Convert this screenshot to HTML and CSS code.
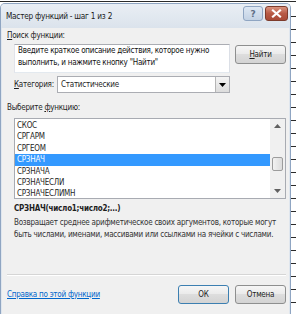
FILE: index.html
```html
<!DOCTYPE html>
<html lang="ru">
<head>
  <meta charset="UTF-8">
  <title>Мастер функций - шаг 1 из 2</title>
  <link rel="stylesheet" href="styles.css">
</head>
<body>

  <div class="window">
    <div class="titlebar">
      <span class="title">Мастер функций - шаг 1 из 2</span>
      <div class="caption-buttons">
        <div class="cap-btn help">?</div>
        <div class="cap-btn close">
          <svg width="11" height="9" viewBox="0 0 11 9">
            <path d="M2 1.5 L9 7.5 M9 1.5 L2 7.5" stroke="#fff" stroke-width="2.2" stroke-linecap="square"/>
          </svg>
        </div>
      </div>
    </div>

    <div class="content">
      <div class="label"><u>П</u>оиск функции:</div>

      <div class="search-row">
        <div class="search-box">Введите краткое описание действия, которое нужно<br>выполнить, и нажмите кнопку "Найти"</div>
        <button class="btn find-btn"><u>Н</u>айти</button>
      </div>

      <div class="category-row">
        <span class="cat-label"><u>К</u>атегория:</span>
        <div class="select">
          <span class="select-value">Статистические</span>
          <div class="select-arrow">
            <svg width="7" height="4" viewBox="0 0 7 4"><path d="M0 0 H7 L3.5 4 Z" fill="#000"/></svg>
          </div>
        </div>
      </div>

      <div class="label choose-label">Выберите <u>ф</u>ункцию:</div>

      <div class="listbox">
        <ul class="items">
          <li>СКОС</li>
          <li>СРГАРМ</li>
          <li>СРГЕОМ</li>
          <li class="selected">СРЗНАЧ</li>
          <li>СРЗНАЧА</li>
          <li>СРЗНАЧЕСЛИ</li>
          <li>СРЗНАЧЕСЛИМН</li>
        </ul>
        <div class="scrollbar">
          <svg class="arrow" width="7" height="4" viewBox="0 0 7 4"><path d="M0 4 H7 L3.5 0 Z" fill="#606060"/></svg>
          <div class="track">
            <div class="thumb"></div>
          </div>
          <svg class="arrow" width="7" height="4" viewBox="0 0 7 4"><path d="M0 0 H7 L3.5 4 Z" fill="#606060"/></svg>
        </div>
      </div>

      <div class="signature">СРЗНАЧ(число1;число2;...)</div>
      <div class="description">Возвращает среднее арифметическое своих аргументов, которые могут<br>быть числами, именами, массивами или ссылками на ячейки с числами.</div>

      <div class="separator"></div>

      <div class="footer">
        <a class="help-link" href="#">Справка по этой функции</a>
        <div class="footer-buttons">
          <button class="btn default">ОК</button>
          <button class="btn">Отмена</button>
        </div>
      </div>
    </div>
  </div>

</body>
</html>
```

FILE: styles.css
```css
body {
  margin: 0;
  width: 296px;
  height: 314px;
  overflow: hidden;
  background-color: #fff;
  background-image: repeating-linear-gradient(to bottom, transparent 0, transparent 12px, #2a2a2a 12px, #2a2a2a 13px);
  background-position: 0 4px;
  font-family: "DejaVu Sans Condensed", "DejaVu Sans", sans-serif;
  font-size: 8px;
  letter-spacing: -0.25px;
  color: #1e1e1e;
}

.window {
  margin-top: 3px;
  width: 291px;
  height: 311px;
  box-sizing: border-box;
  background: #f0f0f0;
  border: 1px solid #8fa5c2;
  border-bottom: none;
  border-radius: 5px 5px 0 0;
  display: flex;
  flex-direction: column;
}

.titlebar {
  height: 24px;
  display: flex;
  align-items: center;
  justify-content: space-between;
  padding: 0 2px 0 5px;
  background: linear-gradient(#e9eef4, #dbe3ec);
  border-radius: 4px 4px 0 0;
}

.title {
  font-size: 8.2px;
  color: #1a1a1a;
}

.caption-buttons {
  display: flex;
  gap: 2px;
  align-self: flex-start;
  margin-top: 2px;
}

.cap-btn {
  height: 13px;
  border-radius: 3px;
  display: flex;
  align-items: center;
  justify-content: center;
}

.help {
  width: 18px;
  background: linear-gradient(#dde7f3, #c3d2e4);
  border: 1px solid #8fa5c2;
  color: #5e6f86;
  font-family: "DejaVu Sans", sans-serif;
  font-size: 9px;
  font-weight: bold;
  letter-spacing: 0;
}

.close {
  width: 21px;
  background: linear-gradient(#d9937f, #b85a45 50%, #a84a36);
  border: 1px solid #7d3b2c;
}

.content {
  flex: 1;
  display: flex;
  flex-direction: column;
  padding: 1px 3px 0 5px;
  border-left: 1px solid #dfe6ee;
  border-right: 1px solid #dfe6ee;
}

.label {
  line-height: 13px;
}

.search-row {
  display: flex;
  justify-content: space-between;
  align-items: flex-start;
  margin-top: 2px;
  padding-left: 7px;
}

.search-box {
  width: 216px;
  height: 29px;
  box-sizing: border-box;
  background: #fff;
  border: 1px solid #abadb3;
  border-color: #abadb3 #dbdfe6 #e3e9ef #e2e3ea;
  padding: 0 3px;
  line-height: 12px;
  color: #111;
}

.btn {
  height: 19px;
  width: 51px;
  padding: 0;
  font: inherit;
  letter-spacing: inherit;
  color: #1e1e1e;
  border: 1px solid #8e8f8f;
  border-radius: 3px;
  background: linear-gradient(#f6f6f6, #ebebeb 45%, #dddddd 50%, #d3d3d3);
}

.find-btn {
  margin-top: 1px;
}

.category-row {
  display: flex;
  align-items: center;
  margin-top: 3px;
  padding-left: 7px;
}

.cat-label {
  width: 43px;
}

.select {
  width: 173px;
  height: 17px;
  box-sizing: border-box;
  display: flex;
  align-items: center;
  justify-content: space-between;
  background: #fff;
  border: 1px solid #abadb3;
}

.select-value {
  padding-left: 3px;
}

.select-arrow {
  width: 14px;
  height: 15px;
  box-sizing: border-box;
  display: flex;
  align-items: center;
  justify-content: center;
  border-left: 1px solid #b5b5b5;
  background: linear-gradient(#f4f4f4, #dcdcdc);
}

.choose-label {
  margin-top: 8px;
}

.listbox {
  margin: 4px 0 0 7px;
  height: 81px;
  box-sizing: border-box;
  display: flex;
  background: #fff;
  border: 1px solid #a8abb2;
}

.items {
  flex: 1;
  list-style: none;
  margin: 0;
  padding: 1px 0 0 0;
}

.items li {
  height: 11.4px;
  line-height: 11.4px;
  padding-left: 2px;
}

.items li.selected {
  background: #3399ff;
  color: #fff;
}

.scrollbar {
  width: 15px;
  display: flex;
  flex-direction: column;
  align-items: center;
  justify-content: space-between;
  padding: 5px 0 5px;
  box-sizing: border-box;
  background: #f0f0f0;
}

.track {
  flex: 1;
  width: 100%;
  display: flex;
  justify-content: center;
  padding-top: 29px;
}

.thumb {
  width: 11px;
  height: 14px;
  box-sizing: border-box;
  border: 1px solid #9c9c9c;
  border-radius: 2px;
  background: linear-gradient(to right, #f2f2f2, #dcdcdc);
}

.signature {
  margin: 4px 0 0 7px;
  font-weight: bold;
  line-height: 12px;
}

.description {
  margin: 2px 0 0 7px;
  line-height: 11.5px;
  color: #333;
  white-space: nowrap;
}

.separator {
  margin-top: auto;
  height: 0;
  border-top: 1px solid #d5d5d5;
  border-bottom: 1px solid #fff;
}

.footer {
  display: flex;
  align-items: center;
  justify-content: space-between;
  height: 36px;
  padding-bottom: 2px;
}

.help-link {
  color: #0066cc;
  text-decoration: underline;
}

.footer-buttons {
  display: flex;
  gap: 6px;
}

.btn.default {
  border-color: #3c7fb1;
}
```
